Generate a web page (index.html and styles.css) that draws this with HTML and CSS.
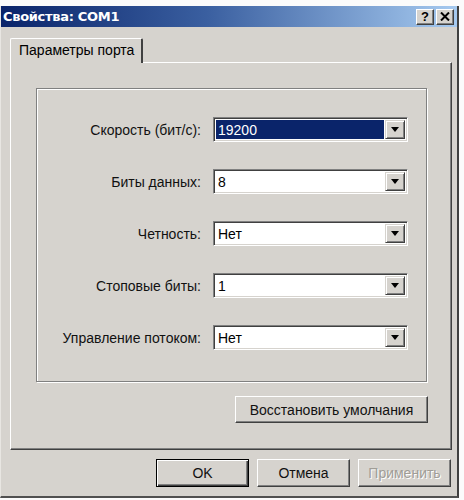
FILE: index.html
```html
<!DOCTYPE html>
<html lang="ru">
<head>
<meta charset="utf-8">
<title>Свойства: COM1</title>
<link rel="stylesheet" href="styles.css">
</head>
<body>
<div class="window">
  <div class="titlebar">
    <span class="title">Свойства: COM1</span>
    <div class="caption-buttons">
      <span class="cbtn">?</span>
      <span class="cbtn close">
        <svg width="10" height="9" viewBox="0 0 10 9"><path d="M1 0.5 L9 8.5 M9 0.5 L1 8.5" stroke="#000" stroke-width="2"/></svg>
      </span>
    </div>
  </div>
  <div class="client">
    <div class="tabs">
      <div class="tab">Параметры порта</div>
    </div>
    <div class="panel">
      <div class="group">
        <div class="row">
          <span class="label">Скорость (бит/с):</span>
          <div class="combo"><span class="value selected">19200</span><span class="arrow"><svg width="8" height="5" viewBox="0 0 8 5"><path d="M0 0 H8 L4 5 Z" fill="#000"/></svg></span></div>
        </div>
        <div class="row">
          <span class="label">Биты данных:</span>
          <div class="combo"><span class="value">8</span><span class="arrow"><svg width="8" height="5" viewBox="0 0 8 5"><path d="M0 0 H8 L4 5 Z" fill="#000"/></svg></span></div>
        </div>
        <div class="row">
          <span class="label">Четность:</span>
          <div class="combo"><span class="value">Нет</span><span class="arrow"><svg width="8" height="5" viewBox="0 0 8 5"><path d="M0 0 H8 L4 5 Z" fill="#000"/></svg></span></div>
        </div>
        <div class="row">
          <span class="label">Стоповые биты:</span>
          <div class="combo"><span class="value">1</span><span class="arrow"><svg width="8" height="5" viewBox="0 0 8 5"><path d="M0 0 H8 L4 5 Z" fill="#000"/></svg></span></div>
        </div>
        <div class="row">
          <span class="label">Управление потоком:</span>
          <div class="combo"><span class="value">Нет</span><span class="arrow"><svg width="8" height="5" viewBox="0 0 8 5"><path d="M0 0 H8 L4 5 Z" fill="#000"/></svg></span></div>
        </div>
      </div>
      <div class="restore-row">
        <button class="btn restore">Восстановить умолчания</button>
      </div>
    </div>
    <div class="footer">
      <button class="btn default">OK</button>
      <button class="btn">Отмена</button>
      <button class="btn disabled">Применить</button>
    </div>
  </div>
</div>
</body>
</html>
```

FILE: styles.css
```css
* { box-sizing: border-box; }

html, body {
  margin: 0;
  padding: 0;
  background: #fbfbfb;
}

body {
  font-family: "Liberation Sans", Arial, sans-serif;
  font-size: 14px;
  color: #000;
  width: 464px;
  height: 500px;
  overflow: hidden;
  padding-top: 6px;
}

.window {
  width: 459px;
  height: 492px;
  background: #d6d3ce;
  border-right: 2px solid #404040;
  border-bottom: 2px solid #505050;
  border-left: 1px solid #e8e6e2;
  display: flex;
  flex-direction: column;
}

.titlebar {
  height: 21px;
  background: linear-gradient(to right, #0a246a 0%, #3a5fa0 45%, #a6caf0 100%);
  display: flex;
  align-items: center;
  justify-content: space-between;
  padding: 0 3px 0 2px;
}

.title {
  color: #fff;
  font-family: "DejaVu Sans", Verdana, sans-serif;
  font-weight: bold;
  font-size: 13px;
  letter-spacing: -0.3px;
}

.caption-buttons {
  display: flex;
  gap: 2px;
}

.cbtn {
  width: 18px;
  height: 16px;
  background: #d6d3ce;
  border-top: 1px solid #fff;
  border-left: 1px solid #fff;
  border-right: 1px solid #404040;
  border-bottom: 1px solid #404040;
  box-shadow: inset -1px -1px 0 #808080;
  display: flex;
  align-items: center;
  justify-content: center;
  font-weight: bold;
  font-size: 13px;
  line-height: 1;
}

.client {
  flex: 1;
  padding: 11px 6px 0 9px;
  display: flex;
  flex-direction: column;
}

.tabs {
  display: flex;
  height: 24px;
}

.tab {
  width: 133px;
  height: 25px;
  border-top: 1px solid #fff;
  border-left: 1px solid #fff;
  border-right: 2px solid #404040;
  border-radius: 2px 2px 0 0;
  background: #d6d3ce;
  padding: 3px 0 0 8px;
  position: relative;
  z-index: 1;
}

.panel {
  width: 442px;
  height: 388px;
  border-top: 1px solid #fff;
  border-left: 1px solid #fff;
  border-right: 1px solid #404040;
  border-bottom: 1px solid #404040;
  box-shadow: inset -1px -1px 0 #808080;
  padding: 25px 0 0 25px;
}

.group {
  width: 391px;
  height: 294px;
  border: 1px solid #808080;
  box-shadow: inset 1px 1px 0 #fff, 1px 1px 0 #fff;
  padding-top: 28px;
  display: flex;
  flex-direction: column;
  gap: 27px;
}

.row {
  display: flex;
  align-items: center;
  height: 25px;
}

.label {
  width: 164px;
  text-align: right;
  padding-right: 0;
  margin-right: 12px;
  color: #111;
}

.combo {
  width: 195px;
  height: 25px;
  background: #fff;
  border-top: 1px solid #808080;
  border-left: 1px solid #808080;
  border-right: 1px solid #fff;
  border-bottom: 1px solid #fff;
  box-shadow: inset 1px 1px 0 #404040, inset -1px -1px 0 #d6d3ce;
  display: flex;
  align-items: stretch;
  padding: 2px;
}

.value {
  flex: 1;
  display: flex;
  align-items: center;
  padding-left: 2px;
  margin-right: 1px;
}

.value.selected {
  background: #0a246a;
  color: #fff;
}

.arrow {
  width: 20px;
  background: #d6d3ce;
  border-top: 1px solid #d6d3ce;
  border-left: 1px solid #d6d3ce;
  border-right: 1px solid #404040;
  border-bottom: 1px solid #404040;
  box-shadow: inset 1px 1px 0 #fff, inset -1px -1px 0 #808080;
  display: flex;
  align-items: center;
  justify-content: center;
}

.restore-row {
  display: flex;
  justify-content: flex-end;
  padding: 14px 0 0 0;
  width: 392px;
}

.btn {
  font-family: "Liberation Sans", Arial, sans-serif;
  font-size: 14px;
  color: #111;
  background: #d6d3ce;
  border-top: 1px solid #fff;
  border-left: 1px solid #fff;
  border-right: 1px solid #404040;
  border-bottom: 1px solid #404040;
  box-shadow: inset -1px -1px 0 #808080;
  border-radius: 0;
  padding: 0;
  margin: 0;
}

.restore {
  width: 193px;
  height: 27px;
}

.footer {
  display: flex;
  justify-content: flex-end;
  gap: 8px;
  padding: 9px 0 0 0;
}

.footer .btn {
  width: 93px;
  height: 28px;
}

.btn.default {
  border: 1px solid #000;
  box-shadow: inset 1px 1px 0 #fff, inset -1px -1px 0 #404040, inset -2px -2px 0 #808080;
}

.btn.disabled {
  color: #a09d97;
  text-shadow: 1px 1px 0 #fff;
}
```
